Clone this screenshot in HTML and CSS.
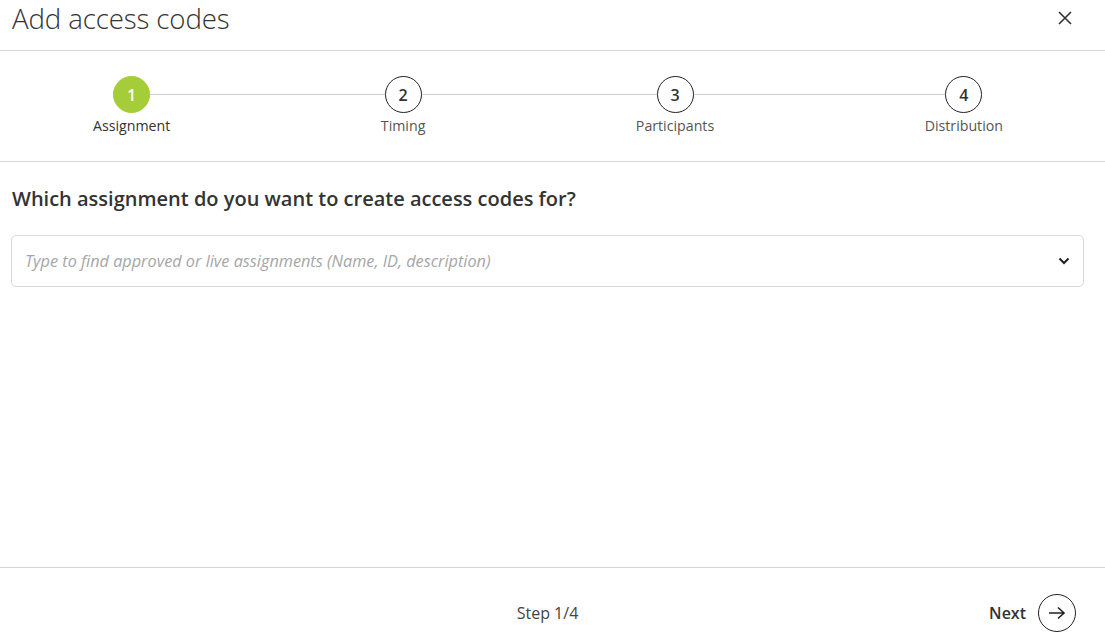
FILE: index.html
```html
<!DOCTYPE html>
<html lang="en">
<head>
<meta charset="utf-8">
<title>Add access codes</title>
<link rel="stylesheet" href="styles.css">
</head>
<body>
<div class="dialog">
  <header class="dialog-header">
    <h1 class="dialog-title">Add access codes</h1>
    <button class="close-btn" aria-label="Close">
      <svg width="14" height="14" viewBox="0 0 14 14"><path d="M1 1L13 13M13 1L1 13" stroke="#333" stroke-width="1.6" fill="none"/></svg>
    </button>
  </header>
  <nav class="stepper">
    <div class="steps">
      <div class="step active"><span class="step-num">1</span><span class="step-label">Assignment</span></div>
      <div class="step"><span class="step-num">2</span><span class="step-label">Timing</span></div>
      <div class="step"><span class="step-num">3</span><span class="step-label">Participants</span></div>
      <div class="step"><span class="step-num">4</span><span class="step-label">Distribution</span></div>
    </div>
  </nav>
  <main class="dialog-body">
    <h2 class="question">Which assignment do you want to create access codes for?</h2>
    <div class="select">
      <span class="placeholder">Type to find approved or live assignments (Name, ID, description)</span>
      <svg class="chevron" width="12" height="8" viewBox="0 0 12 8"><path d="M1.5 1.5L6 6L10.5 1.5" stroke="#222" stroke-width="2" fill="none"/></svg>
    </div>
  </main>
  <footer class="dialog-footer">
    <span class="step-count">Step 1/4</span>
    <button class="next-btn">
      <span>Next</span>
      <span class="next-circle">
        <svg width="18" height="14" viewBox="0 0 18 14"><path d="M1 7H16M10 1.5L16 7L10 12.5" stroke="#222" stroke-width="1.6" fill="none"/></svg>
      </span>
    </button>
  </footer>
</div>
</body>
</html>
```

FILE: styles.css
```css
* { box-sizing: border-box; }
html, body { margin: 0; padding: 0; background: #fff; }
body {
  font-family: "Open Sans", "Liberation Sans", sans-serif;
  color: #333;
  width: 1105px;
  height: 644px;
  overflow: hidden;
}
.dialog {
  display: flex;
  flex-direction: column;
  height: 644px;
}
.dialog-header {
  display: flex;
  align-items: flex-start;
  justify-content: space-between;
  height: 51px;
  border-bottom: 1px solid #d4d4d4;
  padding: 0 33px 0 12px;
}
.dialog-title {
  margin: 0;
  font-weight: 300;
  font-size: 27.6px;
  line-height: 37px;
  color: #333;
  letter-spacing: -0.1px;
}
.close-btn {
  border: 0;
  background: none;
  padding: 0;
  margin-top: 11px;
  width: 14px;
  height: 14px;
  display: flex;
}
.stepper {
  height: 111px;
  border-bottom: 1px solid #d4d4d4;
  padding: 25px 102px 0 93px;
}
.steps {
  position: relative;
  display: flex;
  justify-content: space-between;
}
.steps::before {
  content: "";
  position: absolute;
  left: 39px;
  right: 38px;
  top: 18px;
  height: 1px;
  background: #cfcfcf;
}
.step {
  position: relative;
  display: flex;
  flex-direction: column;
  align-items: center;
}
.step-num {
  width: 37px;
  height: 37px;
  border-radius: 50%;
  border: 1px solid #222;
  background: #fff;
  display: flex;
  align-items: center;
  justify-content: center;
  font-size: 16px;
  font-weight: 600;
  color: #333;
}
.step.active .step-num {
  background: #a5cd39;
  border-color: #a5cd39;
  color: #fff;
}
.step-label {
  margin-top: 3px;
  font-size: 14.2px;
  line-height: 19px;
  color: #555;
}
.step.active .step-label { color: #333; }
.dialog-body {
  flex: 1;
  padding: 23px 21px 0 11px;
  border-bottom: 1px solid #d4d4d4;
}
.question {
  margin: 0 0 22px 1px;
  font-size: 20px;
  font-weight: 600;
  line-height: 28px;
  color: #333;
}
.select {
  display: flex;
  align-items: center;
  justify-content: space-between;
  height: 52px;
  border: 1px solid #d9d9d9;
  border-radius: 5px;
  padding: 0 13px 0 13px;
}
.placeholder {
  font-style: italic;
  font-size: 16.25px;
  color: #a6a6a6;
}
.dialog-footer {
  height: 76px;
  display: flex;
  align-items: center;
  justify-content: flex-end;
  position: relative;
  padding: 14px 29px 0 0;
}
.step-count {
  position: absolute;
  left: 0;
  right: 10px;
  top: 14px;
  bottom: 0;
  display: flex;
  align-items: center;
  justify-content: center;
  font-size: 16px;
  color: #444;
  pointer-events: none;
}
.next-btn {
  position: relative;
  display: flex;
  align-items: center;
  gap: 12px;
  border: 0;
  background: none;
  padding: 0;
  font-family: inherit;
  font-size: 16px;
  font-weight: 600;
  color: #333;
}
.next-circle {
  width: 38px;
  height: 38px;
  border-radius: 50%;
  border: 1px solid #222;
  display: flex;
  align-items: center;
  justify-content: center;
}
```
